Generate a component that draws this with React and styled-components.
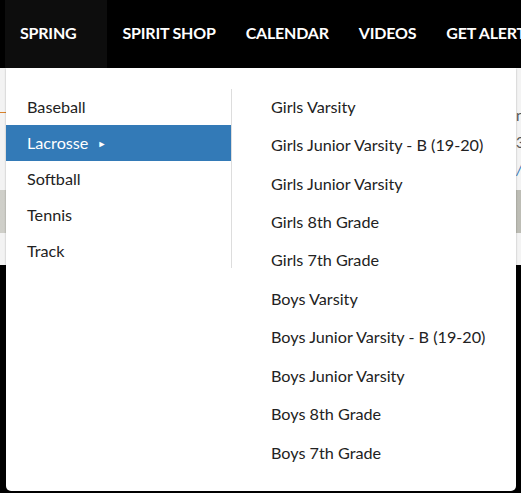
import React from 'react';
import styled, { createGlobalStyle } from 'styled-components';

const GlobalStyle = createGlobalStyle`
  html, body {
    margin: 0;
    padding: 0;
    background: #000;
  }
  body {
    font-family: Lato, "Open Sans", sans-serif;
    width: 521px;
    height: 493px;
    overflow: hidden;
  }
`;

const Page = styled.div`
  position: relative;
  width: 521px;
  height: 493px;
  overflow: hidden;
  background: #000;
`;

const NavBar = styled.nav`
  display: flex;
  height: 68px;
  background: #000;
  padding-left: 5px;
`;

const NavItem = styled.div`
  display: flex;
  align-items: center;
  padding-bottom: 4px;
  padding-left: 15px;
  padding-right: ${p => (p.$active ? '31px' : '15px')};
  background: ${p => (p.$active ? '#0d0d0d' : 'transparent')};
  color: #fff;
  font-weight: 700;
  font-size: 16px;
  letter-spacing: -0.2px;
  white-space: nowrap;
`;

const Content = styled.div`
  height: 197px;
  background: #f3f3f3;
  display: flex;
  flex-direction: column;
`;

const Lines = styled.div`
  height: 122px;
  position: relative;
  padding-left: 516px;
  padding-top: 34px;
  box-sizing: border-box;
  font-size: 15px;
  color: #555;
  line-height: 27px;
`;

const Accent = styled.div`
  position: absolute;
  left: 0;
  top: 44px;
  width: 6px;
  height: 1px;
  background: #d9822b;
`;

const Link = styled.div`
  color: #337ab7;
  font-style: italic;
`;

const ImageBand = styled.div`
  height: 43px;
  background: linear-gradient(90deg, #cfcfc9, #bdbdb5);
`;

const Dropdown = styled.div`
  position: absolute;
  top: 68px;
  left: 6px;
  width: 510px;
  height: 423px;
  background: #fff;
  border-radius: 0 0 5px 5px;
  box-shadow: 0 1px 2px rgba(0, 0, 0, 0.35);
  display: flex;
  padding-top: 21px;
  box-sizing: border-box;
  color: #222;
  font-size: 16.2px;
`;

const SportList = styled.ul`
  list-style: none;
  margin: 0;
  padding: 0;
  width: 225px;
  height: 179px;
  border-right: 1px solid #ddd;
`;

const SportItem = styled.li`
  display: flex;
  align-items: center;
  gap: 9px;
  height: 36px;
  padding-left: 21px;
  padding-bottom: 1px;
  box-sizing: border-box;
  background: ${p => (p.$active ? '#337ab7' : 'transparent')};
  color: ${p => (p.$active ? '#fff' : '#222')};
`;

const Caret = styled.span`
  font-size: 9px;
  line-height: 1;
  padding-top: 1px;
`;

const TeamList = styled.ul`
  list-style: none;
  margin: 0;
  padding: 0 0 0 39px;
`;

const TeamItem = styled.li`
  height: 38.45px;
  display: flex;
  align-items: center;
  padding-bottom: 4px;
  box-sizing: border-box;
`;

const sports = ['Baseball', 'Lacrosse', 'Softball', 'Tennis', 'Track'];
const teams = [
  'Girls Varsity',
  'Girls Junior Varsity - B (19-20)',
  'Girls Junior Varsity',
  'Girls 8th Grade',
  'Girls 7th Grade',
  'Boys Varsity',
  'Boys Junior Varsity - B (19-20)',
  'Boys Junior Varsity',
  'Boys 8th Grade',
  'Boys 7th Grade',
];

export default function App() {
  return (
    <Page>
      <GlobalStyle />
      <NavBar>
        <NavItem $active>SPRING</NavItem>
        <NavItem>SPIRIT SHOP</NavItem>
        <NavItem>CALENDAR</NavItem>
        <NavItem>VIDEOS</NavItem>
        <NavItem>GET ALERTS</NavItem>
      </NavBar>
      <Content>
        <Lines>
          <Accent />
          <div>news</div>
          <div>3/12</div>
          <Link>/more</Link>
        </Lines>
        <ImageBand />
      </Content>
      <Dropdown>
        <SportList>
          {sports.map(s => (
            <SportItem key={s} $active={s === 'Lacrosse'}>
              {s}
              {s === 'Lacrosse' && <Caret>►</Caret>}
            </SportItem>
          ))}
        </SportList>
        <TeamList>
          {teams.map(t => (
            <TeamItem key={t}>{t}</TeamItem>
          ))}
        </TeamList>
      </Dropdown>
    </Page>
  );
}
